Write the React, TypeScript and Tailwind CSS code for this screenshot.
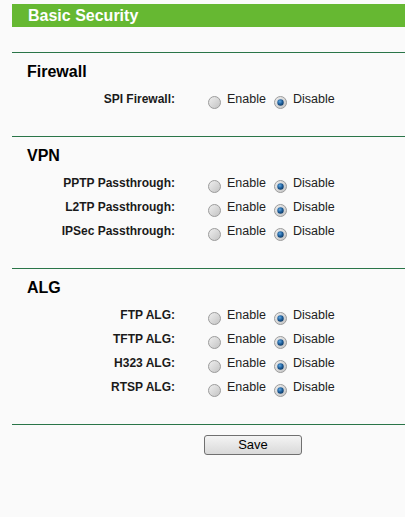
import React from 'react';

function Radio({ checked }: { checked: boolean }) {
  return (
    <svg width="13" height="13" viewBox="0 0 13 13" className="shrink-0 translate-y-[3px]">
      <defs>
        <linearGradient id={checked ? 'rg-on' : 'rg-off'} x1="0" y1="0" x2="1" y2="1">
          <stop offset="0" stopColor="#f0f0f0" />
          <stop offset="1" stopColor="#c2c2c2" />
        </linearGradient>
        <radialGradient id="dot" cx="0.4" cy="0.35" r="0.7">
          <stop offset="0" stopColor="#5fa8e2" />
          <stop offset="0.6" stopColor="#1a5894" />
          <stop offset="1" stopColor="#103a62" />
        </radialGradient>
      </defs>
      <circle cx="6.5" cy="6.5" r="6" fill={checked ? 'url(#rg-on)' : 'url(#rg-off)'} stroke="#9c9c9c" strokeWidth="1" />
      {checked && <circle cx="6.5" cy="6.5" r="3.2" fill="url(#dot)" />}
    </svg>
  );
}

function Row({ label }: { label: string }) {
  return (
    <div className="flex h-[24px] items-center text-[12px]">
      <div className="w-[163px] text-right font-bold text-[#1a1a1a]">{label}</div>
      <div className="ml-[33px] flex items-center text-[12.5px] text-[#222]">
        <Radio checked={false} />
        <span className="ml-[6px]">Enable</span>
        <span className="ml-[8px] flex items-center">
          <Radio checked />
        </span>
        <span className="ml-[6px]">Disable</span>
      </div>
    </div>
  );
}

function Section({ title, rows }: { title: string; rows: string[] }) {
  return (
    <div>
      <div className="h-px bg-[#2a7548]" />
      <div className="pl-[15px] pt-[9px] text-[16px] font-bold leading-[20px] text-black">{title}</div>
      <div className="mt-[5px] pb-[25px]">
        {rows.map((r) => (
          <Row key={r} label={r} />
        ))}
      </div>
    </div>
  );
}

export default function App() {
  return (
    <div
      className="min-h-[517px] w-[405px] bg-[#fafafa] pl-[12px] pt-[4px]"
      style={{ fontFamily: '"Liberation Sans", Arial, sans-serif' }}
    >
      <div className="flex h-[23px] items-center bg-[#66b832] pl-[16px] text-[16px] font-bold text-white">
        Basic Security
      </div>
      <div className="h-[25px]" />

      <Section title="Firewall" rows={['SPI Firewall:']} />
      <Section title="VPN" rows={['PPTP Passthrough:', 'L2TP Passthrough:', 'IPSec Passthrough:']} />
      <Section title="ALG" rows={['FTP ALG:', 'TFTP ALG:', 'H323 ALG:', 'RTSP ALG:']} />

      <div className="h-px bg-[#2a7548]" />
      <div className="pt-[7px] pl-[192px]">
        <button className="h-[20px] w-[98px] rounded-[3px] border border-[#707070] bg-gradient-to-b from-[#f4f4f4] to-[#d9d9d9] text-[13px] leading-[18px] text-black">
          Save
        </button>
      </div>
    </div>
  );
}
